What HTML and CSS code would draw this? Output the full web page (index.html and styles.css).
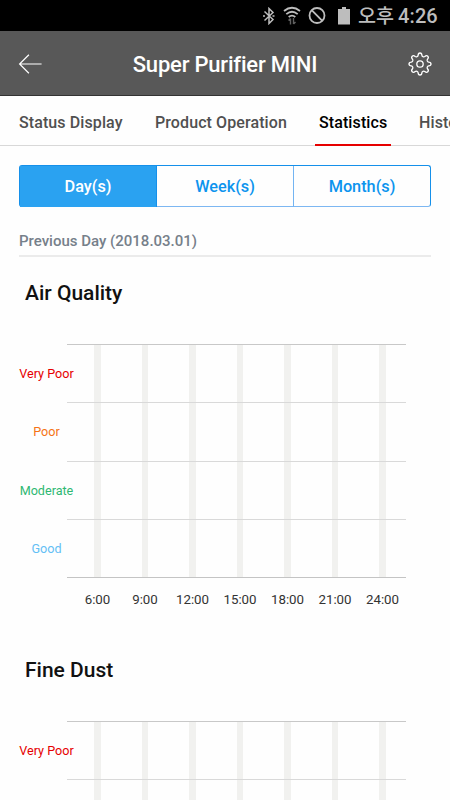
FILE: index.html
```html
<!DOCTYPE html>
<html lang="en">
<head>
<meta charset="utf-8">
<meta name="viewport" content="width=device-width, initial-scale=1">
<title>Super Purifier MINI</title>
<link rel="stylesheet" href="styles.css">
</head>
<body>
<div class="status">
  <svg class="bluetooth" width="12" height="18" viewBox="0 0 12 18"><path d="M1.500 4.500l8.500 8-4 4V1.500L10 5.500l-8.500 8M0 9h2M9.500 9h2" fill="none" stroke="#bdbdbd" stroke-width="1.500"/></svg>
  <svg class="wifi" width="18" height="20" viewBox="0 0 18 20"><g fill="none" stroke="#bdbdbd" stroke-width="1.800"><path d="M1 5q8-6.500 16 0M3.300 8.100q5.700-4.700 11.400 0M5.700 11q3.300-2.800 6.600 0"/></g><path d="M7.500 18.500v-6M5.500 14.500l2-2M10.500 12v6M10.500 18l2-2" fill="none" stroke="#606060" stroke-width="1.400"/></svg>
  <svg class="block" width="18" height="18" viewBox="0 0 18 18"><g fill="none" stroke="#bdbdbd" stroke-width="1.800"><circle cx="9" cy="8.500" r="7.500"/><path d="M3.700 3.200l10.600 10.600"/></g></svg>
  <svg class="battery" width="12" height="18" viewBox="0 0 12 18"><path d="M4 0h4v2h4v15.500H0V2h4z" fill="#bdbdbd"/></svg>
  <span class="clock"><span class="ampm">오후</span> <span class="time">4:26</span></span>
</div>
<header class="header">
  <svg class="back" width="24" height="20" viewBox="0 0 24 20"><path d="M10.900.8L1.600 10l9.300 9.200M1.600 10h22" fill="none" stroke="#fff" stroke-width="1.200"/></svg>
  <h1 class="title">Super Purifier MINI</h1>
  <svg class="gear" width="24" height="24" viewBox="0 0 24 24"><g fill="none" stroke="#fff" stroke-width="1.300" stroke-linejoin="round"><path d="M12 1Q13.800 1 13.900 3.300Q14.100 4.300 15 4.700Q16 5.100 16.800 4.500Q18.500 2.900 19.800 4.200Q21.100 5.500 19.500 7.200Q18.900 8 19.300 9Q19.700 9.900 20.700 10.100Q23 10.200 23 12Q23 13.800 20.700 13.900Q19.700 14.100 19.300 15Q18.900 16 19.500 16.800Q21.100 18.500 19.800 19.800Q18.500 21.100 16.800 19.500Q16 18.900 15 19.300Q14.100 19.700 13.900 20.700Q13.800 23 12 23Q10.200 23 10.100 20.700Q9.900 19.700 9 19.300Q8 18.900 7.200 19.500Q5.500 21.100 4.200 19.800Q2.900 18.500 4.500 16.800Q5.100 16 4.700 15Q4.300 14.100 3.300 13.900Q1 13.800 1 12Q1 10.200 3.300 10.100Q4.300 9.900 4.700 9Q5.100 8 4.500 7.200Q2.900 5.500 4.200 4.200Q5.500 2.900 7.200 4.500Q8 5.100 9 4.700Q9.900 4.300 10.100 3.300Q10.200 1 12 1z"/><circle cx="12" cy="12" r="3.200"/></g></svg>
</header>
<nav class="tabs">
  <span class="tab tab-status">Status Display</span>
  <span class="tab tab-product">Product Operation</span>
  <span class="tab active">Statistics</span>
  <span class="tab">History</span>
</nav>
<main class="main">
  <div class="segments">
    <span class="segment selected">Day(s)</span>
    <span class="segment">Week(s)</span>
    <span class="segment">Month(s)</span>
  </div>
  <p class="date">Previous Day (2018.03.01)</p>
  <section class="section">
    <h2 class="heading">Air Quality</h2>
    <div class="chart">
      <div class="levels"><span class="very-poor">Very Poor</span><span class="poor">Poor</span><span class="moderate">Moderate</span><span class="good">Good</span></div>
      <div class="plot">
        <div class="bars"><i></i><i></i><i></i><i></i><i></i><i></i><i></i></div>
        <div class="rows"><b></b><b></b><b></b><b></b></div>
      </div>
    </div>
    <div class="hours"><span>6:00</span><span>9:00</span><span>12:00</span><span>15:00</span><span>18:00</span><span>21:00</span><span>24:00</span></div>
  </section>
  <section class="section">
    <h2 class="heading">Fine Dust</h2>
    <div class="chart">
      <div class="levels"><span class="very-poor">Very Poor</span></div>
      <div class="plot">
        <div class="bars"><i></i><i></i><i></i><i></i><i></i><i></i><i></i></div>
        <div class="rows"><b></b><b></b><b></b><b></b></div>
      </div>
    </div>
  </section>
</main>
</body>
</html>
```

FILE: styles.css
```css
* { box-sizing: border-box; }
body {
  display: flex;
  flex-direction: column;
  margin: 0;
  width: 450px;
  height: 800px;
  overflow: hidden;
  background: #fefefe;
  font-family: Roboto, "Noto Sans CJK KR", sans-serif;
}
h1, h2, p { margin: 0; font-weight: 500; }
svg { display: block; flex: none; }

.status {
  display: flex;
  flex: none;
  align-items: center;
  height: 31px;
  padding-left: 263px;
  background: #000;
  color: #bdbdbd;
}
.wifi { margin-left: 8px; }
.block { margin-left: 7px; }
.battery { margin-left: 12px; }
.clock {
  display: flex;
  align-items: center;
  gap: 4px;
  margin-left: 8px;
  height: 30px;
  white-space: nowrap;
}
.ampm { padding-bottom: 2px; font: 500 19.6px/28px "Noto Sans CJK KR", sans-serif; }
.time { font-size: 20px; font-weight: 500; letter-spacing: 0.1px; }

.header {
  display: flex;
  flex: none;
  align-items: center;
  justify-content: space-between;
  height: 65px;
  padding: 1px 18px 0;
  background: #585858;
  border-bottom: 1px solid #333;
}
.title { padding-top: 2px; color: #fff; font-size: 22px; line-height: 30px; letter-spacing: -0.2px; }

.tabs {
  display: flex;
  flex: none;
  height: 50px;
  padding-left: 19px;
  border-bottom: 1px solid #d8d8d8;
  white-space: nowrap;
}
.tab {
  flex: none;
  height: 50px;
  margin-right: 28px;
  color: #505050;
  font-size: 16px;
  font-weight: 500;
  line-height: 53px;
  letter-spacing: 0.1px;
}
.tab-status { width: 104px; margin-right: 32px; }
.tab-product { width: 132px; }
.tab.active {
  width: 76px;
  padding-left: 4px;
  border-bottom: 2px solid #e60000;
  color: #000;
}

.main { flex: 1; min-height: 0; padding: 19px 19px 0; overflow: hidden; }
.segments {
  display: grid;
  grid-template-columns: 137px 137px 1fr;
  height: 42px;
  border: 1px solid #1590ea;
  border-bottom-color: #7db7f2;
  border-radius: 3px;
}
.segment {
  border-right: 1px solid #73b4f2;
  color: #0d94ee;
  font-size: 16.3px;
  font-weight: 500;
  line-height: 41px;
  text-align: center;
}
.segment:last-child { border-right: 0; }
.segment.selected { background: #2aa2f1; border-color: #1590ea; color: #fff; }
.date {
  height: 50px;
  padding-top: 24px;
  border-bottom: 2px solid #ebebeb;
  color: #76808a;
  font-size: 15px;
  font-weight: 500;
  line-height: 20px;
}

.section { height: 377px; padding-top: 21px; }
.heading { padding-left: 6px; color: #111; font-size: 21px; line-height: 30px; }
.chart { display: flex; margin-top: 36px; height: 234px; }
.levels {
  display: grid;
  grid-template-rows: repeat(4, 58.25px);
  width: 55px;
  font-size: 12.6px;
  line-height: 59px;
  text-align: center;
  white-space: nowrap;
}
.very-poor { color: #e60000; }
.poor { color: #f57414; }
.moderate { color: #2eb872; }
.good { color: #64bff5; }
.plot { display: grid; width: 339px; margin-left: -7px; }
.bars, .rows { grid-area: 1 / 1; }
.bars { display: flex; justify-content: space-between; padding: 0 20.25px 0 27px; }
.bars i { width: 6.5px; background: #f1f1ef; }
.rows {
  display: grid;
  grid-template-rows: repeat(4, 58.25px);
  border-bottom: 1px solid #c4c4c4;
}
.rows b { border-top: 1px solid #d9d9d9; }
.rows b:first-child { border-color: #c8c8c8; }
.hours {
  display: grid;
  grid-template-columns: repeat(7, 47.5px);
  margin: 12px 0 0 54.75px;
  color: #333;
  font-size: 13.3px;
  line-height: 20px;
  text-align: center;
}
```
